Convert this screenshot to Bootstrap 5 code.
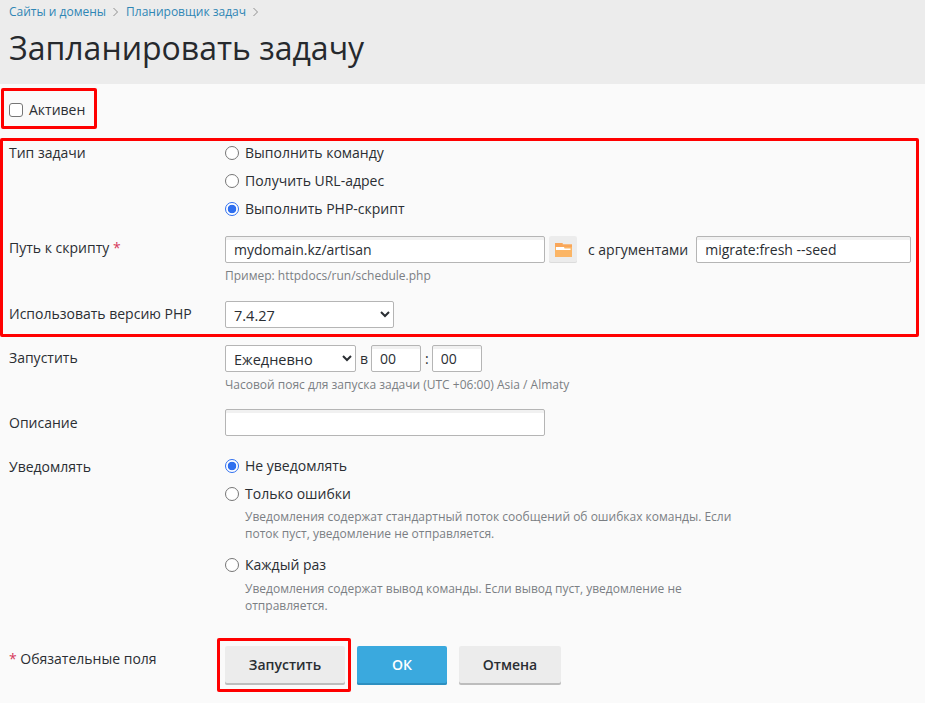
<!DOCTYPE html>
<html lang="ru">
<head>
<meta charset="utf-8">
<title>Запланировать задачу</title>
<link href="https://cdn.jsdelivr.net/npm/bootstrap@5.3.0/dist/css/bootstrap.min.css" rel="stylesheet">
<style>
html,body{height:703px;overflow:hidden}
body{background:#fafafa;font-family:"Open Sans","Liberation Sans",sans-serif;font-size:14px;line-height:20px;color:#2a2e33;position:relative}
.page-head{background:#ececec;height:84px;padding:2px 9px 0}
.crumbs{height:20px;display:flex;align-items:center;gap:6px;color:#2f86b5;font-size:12px}
.crumbs svg{display:block}
.page-head h1{font-size:32px;line-height:44px;font-weight:400;margin:4px 0 0;color:#26292d}
.form-area{padding:0 9px}
.act-row{height:51px;display:flex;align-items:center;gap:6px}
.act-row .box{width:14px;height:14px;margin:0;border:1px solid #767676;border-radius:3px;background:#fff;appearance:none}
.frow{display:flex}
.flabel{width:216px;flex:none}
.fbody{flex:1;min-width:0}
.rad{display:flex;align-items:center;gap:6px;height:20px;margin:0}
.rad input{appearance:none;width:14px;height:14px;margin:0;border:1px solid #767676;border-radius:50%;background:#fff;flex:none}
.rad input:checked{border:1px solid #2f6fef;background:radial-gradient(circle,#2f6fef 0 4px,#fff 4.6px)}
.sp8{margin-top:8px}
.fld{height:27px;border:1px solid #b5b5b5;border-radius:2px;background:#fff;box-shadow:inset 0 3px 0 #f1f1f1;padding:0 8px;font:inherit;color:#2a2e33;display:block;outline:0}
select.fld{appearance:auto;padding:2px 4px 0;line-height:20px;font-size:14.5px;box-shadow:none}
.hintx{font-size:12px;line-height:16px;color:#7b7f84}
.pick{width:28px;height:27px;background:#ececec;box-shadow:inset 0 -1px 0 #dcdcdc;border-radius:2px;display:flex;align-items:center;justify-content:center;border:0;padding:0}
.req{color:#d6395a}
.actions{display:flex;gap:12px}
.act-btn{height:39px;border:0;border-radius:2px;background:#ececec;box-shadow:0 -2px 0 #bdbdbd inset;font-weight:600;color:#2a2e33;padding:0 0 1px;font-size:14px}
.act-btn.go{background:#3aa9de;box-shadow:0 -2px 0 #2d8fc0 inset;color:#fff}
.mark-box{position:absolute;border:3px solid #f00;border-radius:2px;pointer-events:none}
</style>
</head>
<body>
<div class="page-head">
  <div class="crumbs"><span>Сайты и домены</span>
    <svg width="8" height="10" viewBox="0 0 8 10"><path d="M1.500 1l4 4-4 4" fill="none" stroke="#8f8f8f"/></svg>
    <span>Планировщик задач</span>
    <svg width="8" height="10" viewBox="0 0 8 10"><path d="M1.500 1l4 4-4 4" fill="none" stroke="#8f8f8f"/></svg></div>
  <h1>Запланировать задачу</h1>
</div>
<div class="form-area">
  <div class="act-row"><input class="box" type="checkbox"><span>Активен</span></div>
  <div class="frow" style="margin-top:8px">
    <div class="flabel">Тип задачи</div>
    <div class="fbody">
      <label class="rad"><input type="radio" name="t"><span>Выполнить команду</span></label>
      <label class="rad sp8"><input type="radio" name="t"><span>Получить URL-адрес</span></label>
      <label class="rad sp8"><input type="radio" name="t" checked><span>Выполнить PHP-скрипт</span></label>
    </div>
  </div>
  <div class="frow" style="margin-top:17px">
    <div class="flabel" style="padding-top:2px">Путь к скрипту <span class="req">*</span></div>
    <div class="fbody">
      <div class="d-flex align-items-center">
        <input class="fld" style="width:320px" value="mydomain.kz/artisan">
        <button class="pick" style="margin-left:4px" type="button"><svg width="17" height="14" viewBox="0 0 17 14"><path d="M0 0h7.500v1.500H17V14H0z" fill="#fbb565"/><path d="M0 0h7.500v1.500H17V4H0z" fill="#f9a659"/><path d="M1 4h8l.5 1.500h6V7H1z" fill="#fff"/></svg></button>
        <span style="margin-left:11px;margin-right:8px">с аргументами</span>
        <input class="fld" style="width:215px" value="migrate:fresh --seed">
      </div>
      <div class="hintx" style="margin-top:5px">Пример: httpdocs/run/schedule.php</div>
    </div>
  </div>
  <div class="frow" style="margin-top:17px">
    <div class="flabel" style="padding-top:3px">Использовать версию PHP</div>
    <div class="fbody"><select class="fld" style="width:169px"><option>7.4.27</option></select></div>
  </div>
  <div class="frow" style="margin-top:17px">
    <div class="flabel" style="padding-top:3px">Запустить</div>
    <div class="fbody">
      <div class="d-flex align-items-center">
        <select class="fld" style="width:131px"><option>Ежедневно</option></select>
        <span style="margin:0 3px 0 4px">в</span>
        <input class="fld" style="width:50px" value="00">
        <span style="margin:0 3px 0 4px">:</span>
        <input class="fld" style="width:50px" value="00">
      </div>
      <div class="hintx" style="margin-top:5px">Часовой пояс для запуска задачи (UTC +06:00) Asia / Almaty</div>
    </div>
  </div>
  <div class="frow" style="margin-top:16px">
    <div class="flabel" style="padding-top:4px">Описание</div>
    <div class="fbody"><input class="fld" style="width:320px"></div>
  </div>
  <div class="frow" style="margin-top:20px">
    <div class="flabel" style="padding-top:1px">Уведомлять</div>
    <div class="fbody">
      <label class="rad"><input type="radio" name="n" checked><span>Не уведомлять</span></label>
      <label class="rad sp8"><input type="radio" name="n"><span>Только ошибки</span></label>
      <div class="hintx" style="margin:4px 0 0 20px;width:500px;line-height:17px">Уведомления содержат стандартный поток сообщений об ошибках команды. Если поток пуст, уведомление не отправляется.</div>
      <label class="rad" style="margin-top:13px"><input type="radio" name="n"><span>Каждый раз</span></label>
      <div class="hintx" style="margin:5px 0 0 20px;width:500px;line-height:17px">Уведомления содержат вывод команды. Если вывод пуст, уведомление не отправляется.</div>
    </div>
  </div>
  <div class="frow" style="margin-top:32px">
    <div class="flabel" style="padding-top:3px"><span class="req">*</span> Обязательные поля</div>
    <div class="actions">
      <button class="act-btn" style="width:120px" type="button">Запустить</button>
      <button class="act-btn go" style="width:90px" type="button">ОК</button>
      <button class="act-btn" style="width:102px" type="button">Отмена</button>
    </div>
  </div>
</div>
<div class="mark-box" style="left:1px;top:88px;width:96px;height:41px"></div>
<div class="mark-box" style="left:0;top:138px;width:919px;height:199px"></div>
<div class="mark-box" style="left:217px;top:638px;width:134px;height:54px"></div>
<script src="https://cdn.jsdelivr.net/npm/bootstrap@5.3.0/dist/js/bootstrap.bundle.min.js"></script>
</body>
</html>
